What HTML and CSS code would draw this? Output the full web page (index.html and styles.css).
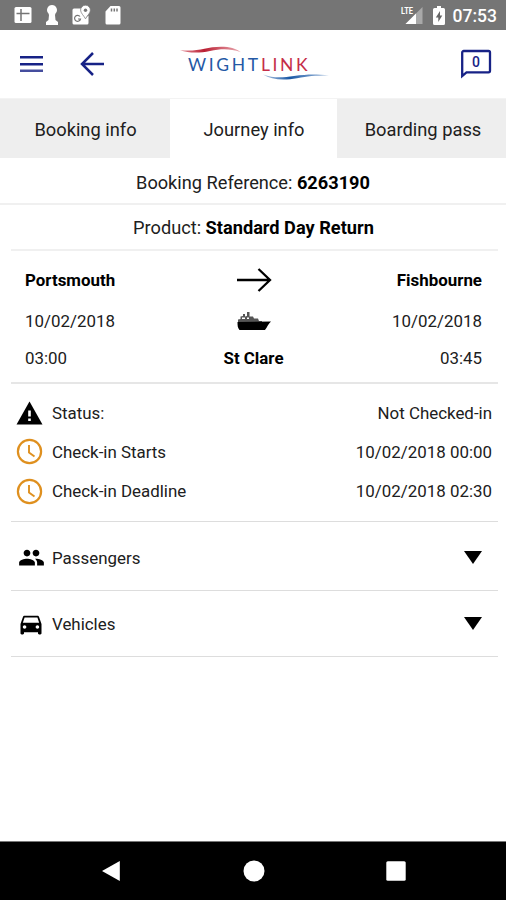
FILE: index.html
```html
<!DOCTYPE html>
<html lang="en">
<head>
<meta charset="utf-8">
<title>Wightlink – Journey info</title>
<link rel="stylesheet" href="styles.css">
</head>
<body>
<div class="status-bar">
  <div class="notifications">
    <svg width="18" height="18" viewBox="0 0 18 18"><rect x=".5" y="1" width="17" height="16" rx="1.500" fill="#fff"/><path d="M7 3v12M2.500 7.500h13" stroke="#757575" stroke-width="1.500"/></svg>
    <svg width="12" height="20" viewBox="0 0 12 20"><path fill="#fff" d="M6 0a5 5 0 0 1 3.500 8.500L9 10l.5 5 2.500 2v3H0v-3l2.500-2L3 10l-.5-1.500A5 5 0 0 1 6 0z"/></svg>
    <svg width="19" height="20" viewBox="0 0 19 20"><path fill="#fff" d="M2 3.500h8c0 4 2 6 4 9l2.500-2v7.500a1.500 1.500 0 0 1-1.500 1.500H2A1.500 1.500 0 0 1 .5 18V5A1.500 1.500 0 0 1 2 3.500z"/><path fill="#fff" stroke="#757575" stroke-width=".7" d="M13.500.2a4.900 4.900 0 0 1 4.900 4.900c0 3-3 5.200-4.900 8.700-1.900-3.500-4.900-5.700-4.900-8.700A4.900 4.900 0 0 1 13.500.2z"/><circle cx="13.500" cy="5.300" r="1.700" fill="#757575"/><path d="M8 11.500A3 3 0 1 0 8.500 14H6" fill="none" stroke="#757575" stroke-width="1.200"/></svg>
    <svg width="16" height="19" viewBox="0 0 16 19"><path fill="#fff" d="M5.500 0H14a1.500 1.500 0 0 1 1.500 1.500v15.500a1.500 1.500 0 0 1-1.500 1.500H2A1.500 1.500 0 0 1 .5 17V5.500z"/><path stroke="#757575" stroke-width="1.500" d="M6.500 2.500v3M9.300 2.500v3M12 2.500v3"/></svg>
  </div>
  <div class="system">
    <svg class="signal" width="23" height="20" viewBox="0 0 23 20"><path fill="#a9a9a9" d="M21.500 2v17H4.500z"/><path fill="#fff" d="M15 8.500V19H4.500z"/><text x="0" y="9" font-size="9" font-weight="700" textLength="12" lengthAdjust="spacingAndGlyphs" fill="#fff">LTE</text></svg>
    <svg class="battery" width="12" height="19" viewBox="0 0 12 19"><path fill="#fff" d="M4 0h4v2h2.500A1.500 1.500 0 0 1 12 3.500v14a1.500 1.500 0 0 1-1.500 1.500h-9A1.500 1.500 0 0 1 0 17.500v-14A1.500 1.500 0 0 1 1.500 2H4z"/><path fill="#666" d="M7 5 2.800 11.500h2.500V16l4-6.500H7z"/></svg>
    <span class="clock">07:53</span>
  </div>
</div>

<header class="header">
  <svg class="menu" width="24" height="20" viewBox="0 0 24 20" fill="#172286"><path d="M0 2h23v2.500H0zM0 9h23v2.500H0z"/><path d="M0 15.500h23v2.500H0z" opacity=".8"/></svg>
  <svg class="back" width="25" height="26" viewBox="0 0 25 26" fill="none" stroke="#172286" stroke-width="2.500"><path d="M24 13H2M13 2 2 13l11 11"/></svg>
  <svg class="logo" width="150" height="36" viewBox="0 0 150 36">
    <defs>
      <linearGradient id="red"><stop stop-color="#c82d40" stop-opacity=".55"/><stop offset=".4" stop-color="#b91f32"/><stop offset="1" stop-color="#c82d40" stop-opacity=".4"/></linearGradient>
      <linearGradient id="blue"><stop stop-color="#2864ad" stop-opacity=".35"/><stop offset=".4" stop-color="#1857a5"/><stop offset="1" stop-color="#2864ad" stop-opacity=".4"/></linearGradient>
    </defs>
    <path fill="url(#red)" d="M0 4c18 2.500 27-4 44-3.200 9 .4 13 3 17 5.400-12-4-20-3.300-31-1.200C20 7 9 7.500 0 4z"/>
    <path fill="url(#blue)" d="M83 28.500c11 4 20 3 31 1.500 14-2 22-2 35-.5-15 0-21 .7-32 2.700-14 2.500-26 1.300-34-3.700z"/>
    <text class="logo-text" x="8" y="25" textLength="70" fill="#2459a5">WIGHT</text>
    <text class="logo-text" x="81" y="25" textLength="46.500" fill="#c52d48">LINK</text>
  </svg>
  <div class="messages">
    <svg width="32" height="30" viewBox="0 0 32 30" fill="none" stroke="#172286" stroke-width="2.300"><path d="M2.200 27V3.500A1.500 1.500 0 0 1 3.700 2H28.500A1.500 1.500 0 0 1 30 3.500v18.300a1.500 1.500 0 0 1-1.500 1.500H6.500z"/></svg>
    <span class="count">0</span>
  </div>
</header>

<nav class="tabs">
  <div class="tab">Booking info</div>
  <div class="tab active">Journey info</div>
  <div class="tab">Boarding pass</div>
</nav>

<main>
  <div class="reference"><span>Booking Reference: <b>6263190</b></span></div>
  <div class="sections">
    <div class="product"><span>Product: <b>Standard Day Return</b></span></div>
    <section class="journey">
      <b>Portsmouth</b>
      <svg width="36" height="26" viewBox="0 0 36 26" fill="none" stroke="#000" stroke-width="2.300"><path d="M1 13h33M22.500 2l11.500 11-11.500 11"/></svg>
      <b>Fishbourne</b>
      <span>10/02/2018</span>
      <svg width="34" height="19" viewBox="0 0 34 19"><path fill="#555" d="M1 11V7.500l2.500-.5V4.500L6 4V2h2v2.500l2-.5V0h2.500v4.500H16l1 2h4l1 2.500h3v2z"/><path fill="#fff" d="M5 5.500h3V7H5zM10 5.500h2V7h-2z"/><path d="M.5 10 34 9.500C31 12 30.500 15 28 18H2.500C.5 16 .5 13 .5 10z"/></svg>
      <span>10/02/2018</span>
      <span>03:00</span>
      <b>St Clare</b>
      <span>03:45</span>
    </section>
    <section class="checkin">
      <div class="row">
        <svg width="27" height="24" viewBox="0 0 27 24"><path d="M13.500.5 26.500 23.500H.5z"/><path fill="#fff" d="M12.200 9.500h2.600v6h-2.600zM12.200 17.500h2.600V20h-2.600z"/></svg>
        <span>Status:</span><span class="value">Not Checked-in</span>
      </div>
      <div class="row">
        <svg width="27" height="27" viewBox="0 0 27 27" fill="none" stroke="#df901f" stroke-width="2.200"><circle cx="13.500" cy="13.500" r="11.600"/><path d="M13 7v7.500l5.500 4" stroke-width="1.900"/></svg>
        <span>Check-in Starts</span><span class="value">10/02/2018 00:00</span>
      </div>
      <div class="row">
        <svg width="27" height="27" viewBox="0 0 27 27" fill="none" stroke="#df901f" stroke-width="2.200"><circle cx="13.500" cy="13.500" r="11.600"/><path d="M13 7v7.500l5.500 4" stroke-width="1.900"/></svg>
        <span>Check-in Deadline</span><span class="value">10/02/2018 02:30</span>
      </div>
    </section>
    <section class="fold passengers">
      <svg width="27" height="27" viewBox="0 0 24 24"><path d="M16 11c1.660 0 2.990-1.340 2.990-3S17.660 5 16 5s-3 1.340-3 3 1.340 3 3 3zm-8 0c1.660 0 2.990-1.340 2.990-3S9.660 5 8 5 5 6.340 5 8s1.340 3 3 3zm0 2c-2.330 0-7 1.170-7 3.500V19h14v-2.500c0-2.330-4.670-3.500-7-3.500zm8 0c-.29 0-.62.02-.97.05 1.160.84 1.970 1.970 1.970 3.450V19h6v-2.500c0-2.330-4.670-3.500-7-3.500z"/></svg>
      <span>Passengers</span><i class="arrow"></i>
    </section>
    <section class="fold vehicles">
      <svg width="28" height="28" viewBox="0 0 24 24"><path d="M18.920 6.010C18.720 5.420 18.160 5 17.500 5h-11c-.66 0-1.210.42-1.420 1.010L3 12v8c0 .55.45 1 1 1h1c.55 0 1-.45 1-1v-1h12v1c0 .55.45 1 1 1h1c.55 0 1-.45 1-1v-8l-2.080-5.990zM6.500 16c-.83 0-1.500-.67-1.500-1.500S5.670 13 6.500 13s1.500.67 1.500 1.500S7.330 16 6.500 16zm11 0c-.83 0-1.500-.67-1.500-1.500s.67-1.500 1.500-1.500 1.500.67 1.500 1.500-.67 1.500-1.500 1.500zM5 11l1.500-4.500h11L19 11H5z"/></svg>
      <span>Vehicles</span><i class="arrow"></i>
    </section>
  </div>
</main>

<footer class="nav-bar">
  <svg width="20" height="22" viewBox="0 0 20 22" fill="#fff"><path d="M18.800 1v20L1 11z"/></svg>
  <svg width="22" height="22" viewBox="0 0 22 22" fill="#fff"><circle cx="11" cy="11" r="10.500"/></svg>
  <svg width="20" height="20" viewBox="0 0 20 20" fill="#fff"><rect x=".3" y=".3" width="19.400" height="19.400" rx="1.500"/></svg>
</footer>
</body>
</html>
```
FILE: styles.css
```css
* { box-sizing: border-box; }
body {
  margin: 0;
  height: 900px;
  display: flex;
  flex-direction: column;
  background: #fff;
  color: #202020;
  font: 16.900px/20px Roboto, sans-serif;
  overflow: hidden;
}
svg { display: block; flex: none; }
b { font-weight: 700; color: #000; }

.status-bar {
  height: 30px;
  flex: none;
  display: flex;
  justify-content: space-between;
  padding: 0 9px 0 14px;
  background: #757575;
}
.notifications, .system { display: flex; align-items: center; }
.notifications { gap: 14px; }
.system { color: #fff; }
.signal { margin-right: 9px; }
.battery { margin-right: 8px; }
.clock { padding-top: 2px; font-size: 17.500px; font-weight: 500; }

.header {
  height: 69px;
  flex: none;
  display: flex;
  align-items: center;
  padding: 0 14px 0 20px;
  border-bottom: 1px solid #f3f3f3;
}
.back { margin-left: 36px; }
.logo { margin-left: 74.500px; }
.logo-text { font: 400 17.500px Lato, sans-serif; }
.messages { display: grid; margin-left: auto; }
.messages > * { grid-area: 1 / 1; }
.count {
  justify-self: center;
  padding-top: 3px;
  color: #172286;
  font-size: 14px;
  font-weight: 500;
}

.tabs {
  height: 59px;
  flex: none;
  display: grid;
  grid-template-columns: 170px 167px 1fr;
  font-size: 18.300px;
}
.tab {
  display: flex;
  align-items: center;
  justify-content: center;
  padding: 2px 0 0 1px;
  background: #eee;
}
.tab:last-child { padding-left: 3px; }
.active { background: #fff; }

main { flex: 1; }
.reference, .product {
  display: flex;
  align-items: center;
  justify-content: center;
  height: 47px;
  padding-top: 4px;
  border-bottom: 2px solid #f0f0f0;
  font-size: 18.200px;
}
.sections { margin: 0 8px 0 11px; }
.product { height: 46px; padding: 2px 2px 0 0; }
.journey {
  display: grid;
  grid-template-columns: 1fr auto 1fr;
  grid-template-rows: 45px 38px 36px;
  align-items: center;
  justify-items: center;
  height: 133px;
  padding: 6px 16px 0 14px;
  border-bottom: 2px solid #e6e6e6;
}
.journey > :nth-child(3n + 1) { justify-self: start; }
.journey > :nth-child(3n) { justify-self: end; }

.checkin {
  height: 138px;
  padding: 9px 6px 0 5px;
  border-bottom: 1px solid #ddd;
}
.row { display: flex; align-items: center; height: 39.300px; }
.row svg { margin-right: 9px; }
.value { margin-left: auto; }

.fold {
  display: flex;
  align-items: center;
  height: 69px;
  padding: 3px 16px 0 7px;
  border-bottom: 1px solid #ddd;
}
.fold span { margin-left: 7px; }
.vehicles { height: 66px; padding: 0 16px 0 6px; }
.arrow {
  margin-left: auto;
  border: solid transparent;
  border-width: 13px 9px 0;
  border-top-color: #000;
}

.nav-bar {
  height: 59px;
  flex: none;
  display: flex;
  align-items: center;
  justify-content: space-between;
  padding: 0 100px 0 101px;
  border-top: 1px solid #777;
  background: #000;
}
```
